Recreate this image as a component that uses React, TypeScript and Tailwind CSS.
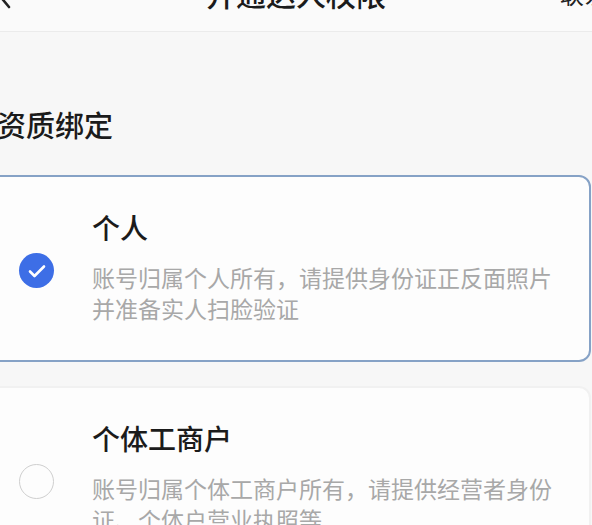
import React from 'react';

const font = { fontFamily: '"Noto Sans CJK SC", "Noto Sans", sans-serif' };

interface OptionProps {
  title: string;
  desc: string;
  checked: boolean;
}

const OptionCard: React.FC<OptionProps> = ({ title, desc, checked }) => (
  <div
    className={`flex items-center rounded-[12px] border-[2px] bg-[#fdfdfd] pl-[37px] pt-[32px] pb-[36px] ${
      checked ? 'border-[#86a2c6]' : 'border-[#f1f1f1]'
    }`}
  >
    <div className="mt-[8px] flex w-[73px] shrink-0 items-center">
      {checked ? (
        <div className="flex h-[35px] w-[35px] items-center justify-center rounded-full bg-[#3d6ee6]">
          <svg width="18" height="14" viewBox="0 0 18 14" fill="none">
            <path d="M2 7.5l4.5 4.5L16 2.5" stroke="white" strokeWidth="2.6" strokeLinecap="round" strokeLinejoin="round" />
          </svg>
        </div>
      ) : (
        <div className="h-[35px] w-[35px] rounded-full border-[1.5px] border-[#cfcfcf]" />
      )}
    </div>
    <div className="flex flex-col">
      <div className="text-[28px] leading-[36px] font-medium text-[#1b1b1b]">{title}</div>
      <div className="mt-[17px] w-[464px] text-[23px] leading-[31px] text-[#a8a8a8]">{desc}</div>
    </div>
  </div>
);

export default function App() {
  return (
    <div className="h-[525px] w-[592px] overflow-hidden bg-[#f7f7f7]" style={font}>
      {/* Header */}
      <div className="-mt-[44px] flex h-[76px] items-center border-b border-[#ebebeb] bg-[#fafafa]">
        <div className="flex w-[150px] items-center">
          <svg width="16" height="28" viewBox="0 0 16 28" fill="none" className="-ml-[4px] mt-[2px]">
            <path d="M13 2L3 14l10 12" stroke="#222" strokeWidth="2.6" strokeLinecap="round" strokeLinejoin="round" />
          </svg>
        </div>
        <div className="flex-1 text-center text-[30px] font-medium text-[#1b1b1b]">开通达人权限</div>
        <div className="w-[150px] whitespace-nowrap pl-[118px] text-[24px] text-[#222]">联系客服</div>
      </div>

      {/* Body */}
      <div className="-ml-[20px] w-[611px]">
        <div className="pl-[17px] pt-[72px] text-[29px] leading-[40px] font-medium text-[#1b1b1b]">资质绑定</div>
        <div className="mt-[31px] flex flex-col gap-[24px]">
          <OptionCard
            title="个人"
            desc="账号归属个人所有，请提供身份证正反面照片并准备实人扫脸验证"
            checked
          />
          <OptionCard
            title="个体工商户"
            desc="账号归属个体工商户所有，请提供经营者身份证、个体户营业执照等"
            checked={false}
          />
        </div>
      </div>
    </div>
  );
}
